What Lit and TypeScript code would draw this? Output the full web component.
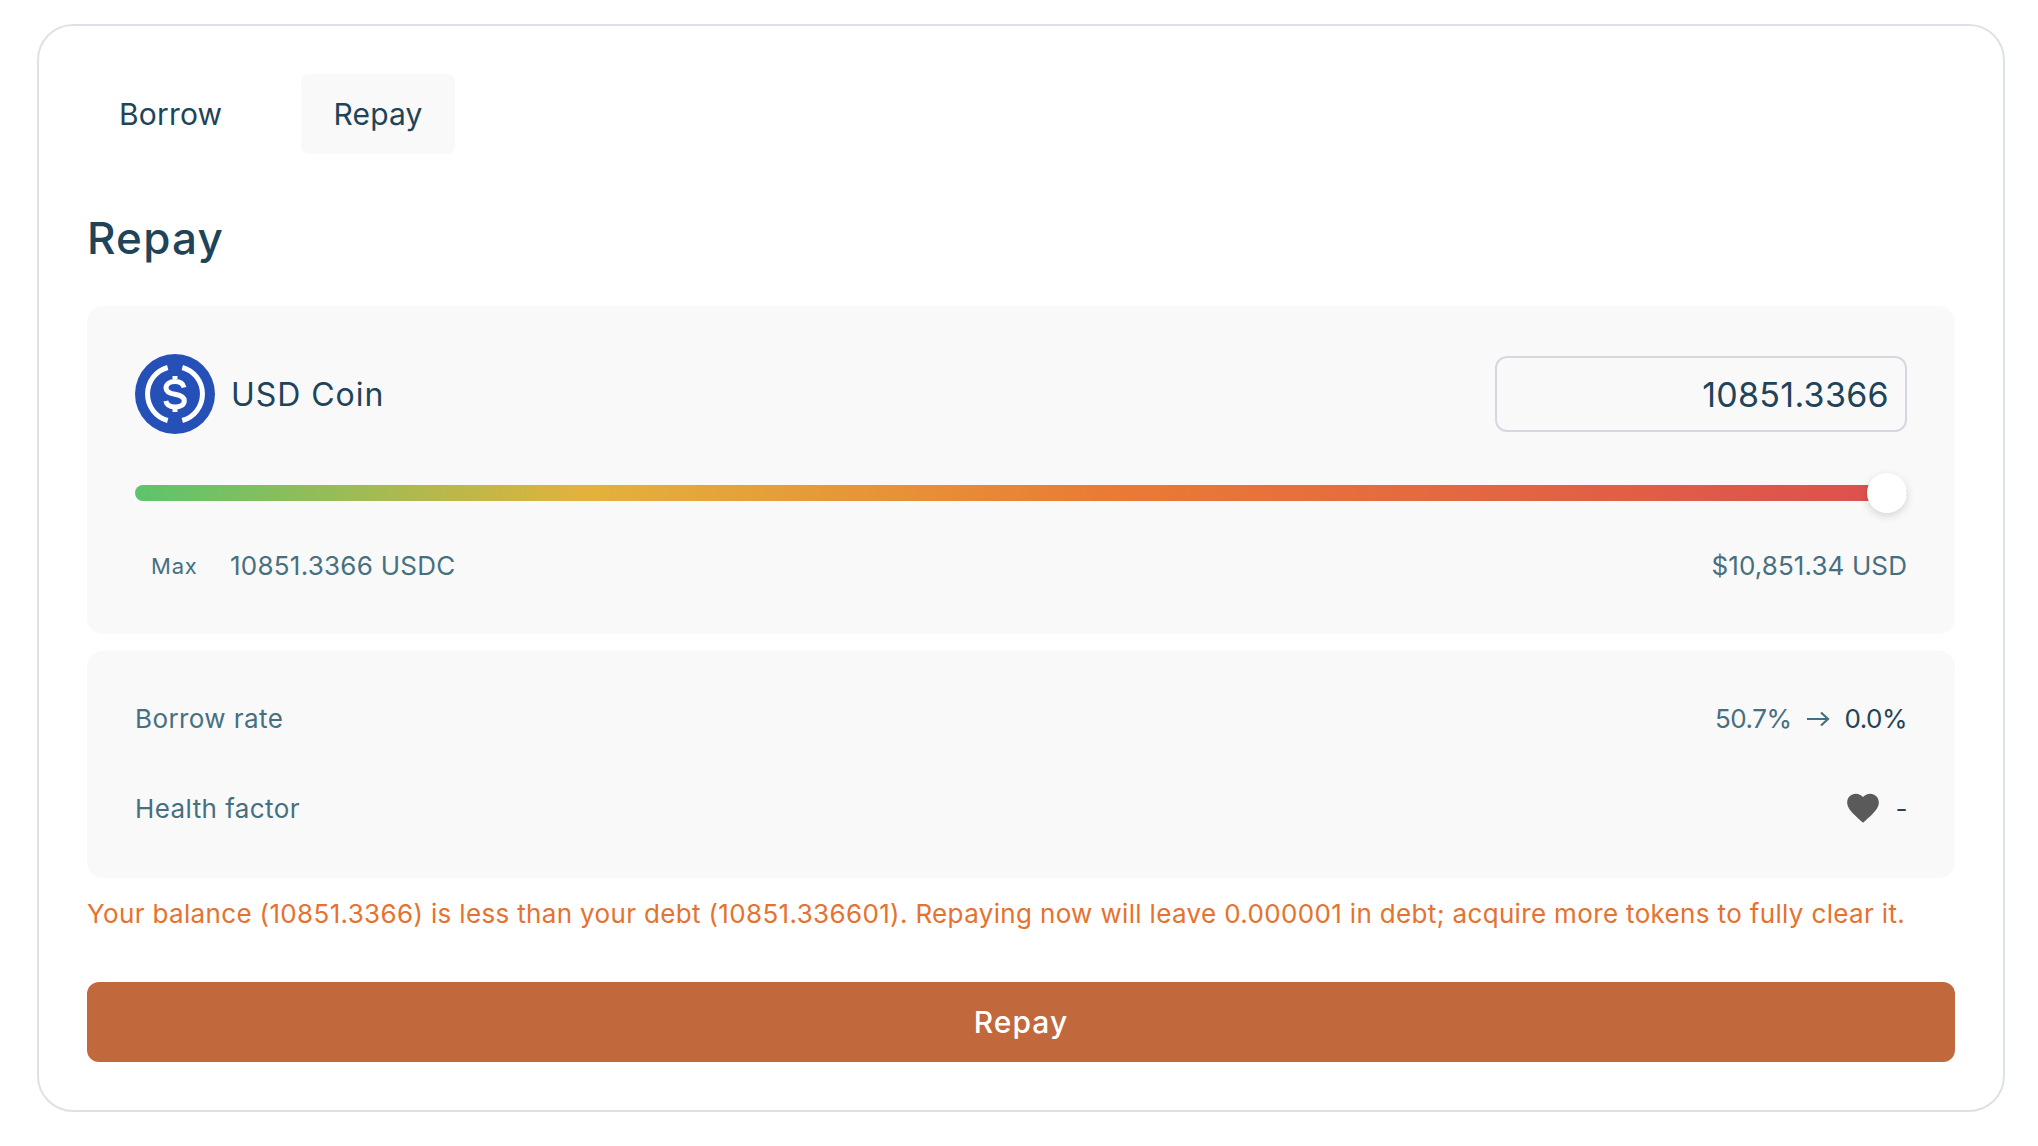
import { LitElement, html, css } from "lit";
import { customElement } from "lit/decorators.js";

@customElement("app-root")
export class AppRoot extends LitElement {
  static styles = css`
    :host { display: block; background: #fff; min-height: 1146px; font-family: Inter, "Noto Sans", sans-serif; color: #1f4459; box-sizing: border-box; padding: 24px 33px 0 37px; font-weight: 430; }
    * { box-sizing: border-box; }
    .card { border: 2px solid #dde2e8; border-radius: 36px; height: 1088px; padding: 48px 48px 0 48px; display: flex; flex-direction: column; }
    .tabs { display: flex; gap: 47px; height: 80px; }
    .tab { height: 80px; padding: 0 32px; display: flex; align-items: center; font-size: 30px; border-radius: 8px; letter-spacing: 0.2px; }
    .tab.active { background: #f9f9f9; }
    h2 { margin: 53px 0 0; font-size: 44px; line-height: 62px; font-weight: 450; height: 99px; letter-spacing: 1.2px; }
    .panel { background: #f9f9f9; border-radius: 16px; padding: 0 48px; }
    .asset { height: 328px; padding-top: 48px; display: flex; flex-direction: column; margin-bottom: 17px; }
    .row1 { display: flex; align-items: center; justify-content: space-between; height: 80px; }
    .coin { display: flex; align-items: center; gap: 16px; font-size: 32px; letter-spacing: 0.95px; }
    .coin svg { display: block; }
    .input { width: 412px; height: 76px; border: 2px solid #d4d8e0; border-radius: 12px; display: flex; align-items: center; justify-content: flex-end; padding-right: 16px; font-size: 34px; letter-spacing: 0.3px; }
    .slider { position: relative; height: 16px; margin-top: 51px; border-radius: 8px; background: linear-gradient(90deg, #5cc46c 0%, #e3b23c 25.5%, #e97b35 55%, #dc4f4f 100%); }
    .thumb { position: absolute; right: 0; top: -12px; width: 40px; height: 40px; border-radius: 50%; background: #fff; box-shadow: 0 3px 8px rgba(0,0,0,.15); }
    .row3 { display: flex; align-items: center; justify-content: space-between; margin-top: 45px; color: #46707f; font-size: 26px; line-height: 40px; letter-spacing: 0.25px; }
    .usd { letter-spacing: 0.1px; }
    .max { display: flex; align-items: center; }
    .max-btn { font-size: 22px; padding-left: 16px; width: 95px; letter-spacing: 0.8px; }
    .details { height: 227px; padding-top: 45px; color: #46707f; font-size: 26px; }
    .line { display: flex; align-items: center; justify-content: space-between; height: 45px; }
    .line + .line { margin-top: 45px; }
    .label { letter-spacing: 0.42px; }
    .vals { display: flex; align-items: center; letter-spacing: -0.5px; }
    .arrow { margin: 0 14px 0 15px; display: block; }
    .new { color: #1f4459; }
    .heart { display: block; margin-right: 14px; margin-top: -2px; }
    .error { color: #e5722e; font-size: 26px; line-height: 40px; margin-top: 16px; white-space: nowrap; font-weight: 400; letter-spacing: 0.345px; }
    .btn { margin-top: 48px; height: 80px; border-radius: 12px; background: #c1693c; color: #fff; display: flex; align-items: center; justify-content: center; font-size: 30px; font-weight: 500; letter-spacing: 1px; }
  `;

  render() {
    return html`
      <div class="card">
        <div class="tabs">
          <div class="tab">Borrow</div>
          <div class="tab active">Repay</div>
        </div>
        <h2>Repay</h2>
        <div class="panel asset">
          <div class="row1">
            <div class="coin">
              <svg width="80" height="80" viewBox="0 0 80 80" fill="none">
                <circle cx="40" cy="40" r="40" fill="#2450b8"/>
                <g stroke="#fff" stroke-width="5">
                  <path d="M32.7 13.5A27.5 27.5 0 0 0 32.7 66.5"/>
                  <path d="M47.3 13.5A27.5 27.5 0 0 1 47.3 66.5"/>
                  <path d="M49 33.5c-.8-3.8-4.3-6-9-6-5.2 0-9 2.6-9 6.5 0 4.2 4 5.4 9 6.3 5.2 1 9.3 2.4 9.3 6.4 0 4-3.9 6.3-9.3 6.3-4.9 0-8.3-2.2-9.2-6"/>
                  <path d="M40 25V22M40 58V54"/>
                </g>
              </svg>
              <span>USD Coin</span>
            </div>
            <div class="input">10851.3366</div>
          </div>
          <div class="slider"><div class="thumb"></div></div>
          <div class="row3">
            <div class="max"><span class="max-btn">Max</span><span>10851.3366 USDC</span></div>
            <span class="usd">$10,851.34 USD</span>
          </div>
        </div>
        <div class="panel details">
          <div class="line">
            <span class="label">Borrow rate</span>
            <div class="vals">
              <span>50.7%</span>
              <svg class="arrow" width="24" height="20" viewBox="0 0 24 20" fill="none" stroke="#46707f" stroke-width="2.2"><path d="M1 10H22M15 3.5L22 10L15 16.5"/></svg>
              <span class="new">0.0%</span>
            </div>
          </div>
          <div class="line">
            <span class="label">Health factor</span>
            <div class="vals new">
              <svg class="heart" width="38" height="38" viewBox="0 0 24 24" fill="#5a5a5a"><path d="M12 21.35l-1.45-1.32C5.4 15.36 2 12.28 2 8.5 2 5.42 4.42 3 7.5 3c1.74 0 3.41.81 4.5 2.09C13.09 3.81 14.76 3 16.5 3 19.58 3 22 5.42 22 8.5c0 3.78-3.4 6.86-8.55 11.54L12 21.35z"/></svg>
              <span>-</span>
            </div>
          </div>
        </div>
        <div class="error">Your balance (10851.3366) is less than your debt (10851.336601). Repaying now will leave 0.000001 in debt; acquire more tokens to fully clear it.</div>
        <div class="btn">Repay</div>
      </div>
    `;
  }
}
